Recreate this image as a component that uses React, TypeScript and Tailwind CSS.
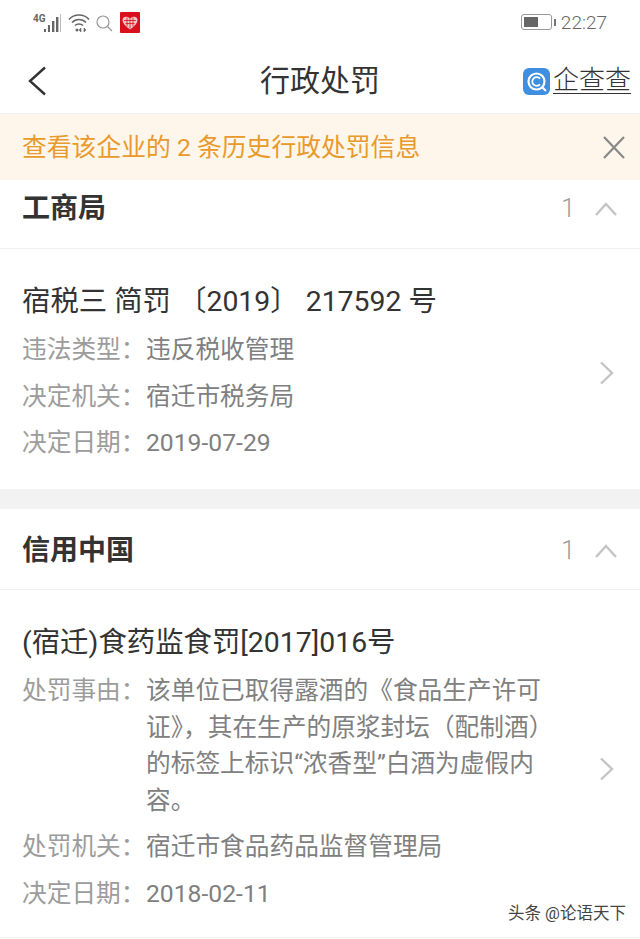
const FONT = { fontFamily: 'Roboto, "Noto Sans CJK SC", "Noto Sans", sans-serif' };

function StatusBar() {
  return (
    <div className="h-[45px] flex items-start justify-between pl-[33px] pr-[33px] pt-[12px]">
      <div className="flex items-center h-[21px]">
        <svg width="29" height="20" viewBox="0 0 29 20">
          <text x="0" y="9" fontSize="10" fontWeight="700" fill="#666" fontFamily="Roboto">4G</text>
          <rect x="11" y="16" width="2" height="3" fill="#666" />
          <rect x="15" y="12" width="2" height="7" fill="#666" />
          <rect x="19" y="8" width="2.4" height="11" fill="#666" />
          <rect x="23" y="4" width="2.4" height="15" fill="#666" />
          <rect x="27" y="1" width="1" height="18" fill="#bbb" />
        </svg>
        <svg className="ml-[6px]" width="22" height="20" viewBox="0 0 22 20" fill="none" stroke="#666" strokeWidth="1.6">
          <path d="M1 6.5 C6 0.5 16 0.5 21 6.5" />
          <path d="M4 9.5 C8 5.5 14 5.5 18 9.5" />
          <path d="M7 12.5 C9 10.5 13 10.5 15 12.5" />
          <circle cx="9" cy="17" r="1.5" fill="#666" stroke="none" />
          <path d="M13 15v4l-2-2zM16 15v4l2-2z" fill="#666" strokeWidth="0.6" />
        </svg>
        <svg className="ml-[6px]" width="17" height="18" viewBox="0 0 17 18" fill="none" stroke="#999" strokeWidth="1.2">
          <circle cx="7" cy="8" r="6" />
          <path d="M11.5 12.5l4.5 4.5" />
        </svg>
        <svg className="ml-[7px]" width="20" height="21" viewBox="0 0 20 21">
          <rect width="20" height="21" rx="1" fill="#d9101c" />
          <path d="M10 17.5 C5 14 2.5 11 2.5 8 C2.5 4.5 7 3.5 10 6.5 C13 3.5 17.5 4.5 17.5 8 C17.5 11 15 14 10 17.5Z" fill="#f5c8c8" />
          <path d="M4 8.5h12M5.5 11.5h9M7 5.5v9M10 6.5v10M13 5.5v9" stroke="#d9101c" strokeWidth="0.8" />
        </svg>
      </div>
      <div className="flex items-center gap-[5px] h-[20px]">
        <div className="flex items-center">
          <div className="w-[31px] h-[16px] rounded-[3px] border border-[#999] p-[2px] bg-white">
            <div className="w-[14px] h-full bg-[#666]" />
          </div>
          <div className="w-[2px] h-[7px] bg-[#777] ml-[2px]" />
        </div>
        <span className="text-[19px] leading-none text-[#666] font-light" style={FONT}>22:27</span>
      </div>
    </div>
  );
}

function NavBar() {
  return (
    <div className="h-[69px] flex items-center border-b border-[#f0f0f0] pt-[4px]">
      <div className="flex-1">
        <svg className="ml-[27px]" width="20" height="30" viewBox="0 0 20 30" fill="none" stroke="#333" strokeWidth="2.4">
          <path d="M18 1.5L3 15l15 13.5" />
        </svg>
      </div>
      <h1 className="text-[30px] leading-none text-[#333]" style={FONT}>行政处罚</h1>
      <div className="flex-1 flex items-center justify-end">
        <div className="flex items-center gap-[3px] mr-[9px]">
          <svg width="27" height="27" viewBox="0 0 27 27">
            <rect width="27" height="27" rx="6" fill="#3f8fe0" />
            <circle cx="13.5" cy="13.5" r="8" fill="none" stroke="#fff" strokeWidth="2.2" />
            <path d="M17 10.6 A4.4 4.4 0 1 0 17 16.4" fill="none" stroke="#fff" strokeWidth="1.8" />
            <path d="M19 19l4 4" stroke="#fff" strokeWidth="2.2" />
          </svg>
          <span className="text-[26px] leading-[25px] text-[#333] border-b border-[#333] font-light" style={FONT}>企查查</span>
        </div>
      </div>
    </div>
  );
}

function Banner() {
  return (
    <div className="h-[66px] bg-[#fef6ea] flex items-center justify-between pl-[22px] pr-[15px]">
      <span className="text-[24.8px] leading-none text-[#e99a2c] pt-[3px]" style={FONT}>查看该企业的 2 条历史行政处罚信息</span>
      <svg width="22" height="23" viewBox="0 0 22 23" fill="none" stroke="#888" strokeWidth="2.2">
        <path d="M1 1l20 21M21 1L1 22" />
      </svg>
    </div>
  );
}

function SectionHeader({ title, className }: { title: string; className: string }) {
  return (
    <div className={`${className} flex items-center justify-between pl-[22px] pr-[23px] border-b border-[#f0f0f0]`}>
      <h2 className="text-[28px] leading-none font-bold text-[#333]" style={FONT}>{title}</h2>
      <div className="flex items-center gap-[20px]">
        <span className="text-[25px] leading-none text-[#9a9a9a] font-light" style={FONT}>1</span>
        <svg width="22" height="14" viewBox="0 0 22 14" fill="none" stroke="#c4c4c4" strokeWidth="2.4">
          <path d="M1 13L11 2l10 11" />
        </svg>
      </div>
    </div>
  );
}

function Row({ label, value }: { label: string; value: string }) {
  return (
    <div className="flex text-[24.7px] leading-[36.5px]" style={FONT}>
      <span className="w-[124px] shrink-0 text-[#9c9c9c]">{label}</span>
      <span className="text-[#808080]">{value}</span>
    </div>
  );
}

function Record({ title, rows, className, arrowClass }: { title: string; rows: { label: string; value: string }[]; className: string; arrowClass: string }) {
  return (
    <div className={`${className} flex items-start justify-between pl-[22px] pr-[26px]`}>
      <div className="flex flex-col gap-[10px] w-[546px]">
        <h3 className="text-[28.4px] leading-[40px] text-[#333]" style={FONT}>{title}</h3>
        {rows.map(r => (
          <Row key={r.label} label={r.label} value={r.value} />
        ))}
      </div>
      <svg className={arrowClass} width="15" height="24" viewBox="0 0 15 24" fill="none" stroke="#c4c4c4" strokeWidth="2.4">
        <path d="M2 1.5L13 12 2 22.5" />
      </svg>
    </div>
  );
}

export default function App() {
  return (
    <div className="w-[640px] h-[939px] bg-white overflow-hidden relative">
      <StatusBar />
      <NavBar />
      <Banner />
      <SectionHeader title="工商局" className="h-[69px] pb-[11px]" />
      <Record
        title="宿税三 简罚 〔2019〕 217592 号"
        className="h-[240px] pt-[33px]"
        arrowClass="mt-[79px]"
        rows={[
          { label: '违法类型\uFF1A', value: '违反税收管理' },
          { label: '决定机关\uFF1A', value: '宿迁市税务局' },
          { label: '决定日期\uFF1A', value: '2019-07-29' },
        ]}
      />
      <div className="h-[20px] bg-[#f2f2f2]" />
      <SectionHeader title="信用中国" className="h-[81px] pt-[3px]" />
      <Record
        title="(宿迁)食药监食罚[2017]016号"
        className="h-[347px] pt-[33px]"
        arrowClass="mt-[134px]"
        rows={[
          { label: '处罚事由\uFF1A', value: '该单位已取得露酒的《食品生产许可证》\uFF0C其在生产的原浆封坛\uFF08配制酒\uFF09的标签上标识“浓香型”白酒为虚假内容。' },
          { label: '处罚机关\uFF1A', value: '宿迁市食品药品监督管理局' },
          { label: '决定日期\uFF1A', value: '2018-02-11' },
        ]}
      />
      <div className="h-px bg-[#f0f0f0]" />
      <span className="absolute left-[508px] top-[906px] text-[16.5px] leading-none text-[#444]" style={FONT}>头条 @论语天下</span>
    </div>
  );
}
